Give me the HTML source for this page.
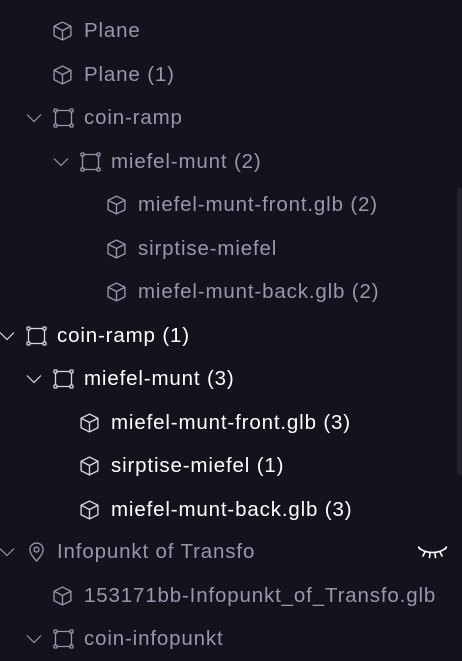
<!DOCTYPE html>
<html><head><meta charset="utf-8"><style>
body{margin:0;width:462px;height:660px;background:#13131d;overflow:hidden;font-family:"Liberation Sans",sans-serif;position:relative}
.r{position:absolute;height:44px;left:0;right:0}
.r span{position:absolute;top:50%;transform:translateY(-50%);font-size:20.5px;letter-spacing:0.85px;white-space:nowrap}
.d span,.d svg{color:#9797ad}
.b span{color:#ffffff}
.b svg{color:#d8d8e0}
svg{position:absolute;top:50%;transform:translateY(-50%)}
.sb{position:absolute;left:457px;top:187px;width:5px;height:288px;background:#22222d;border-radius:3px}
</style></head><body>
<svg width="0" height="0" style="position:absolute"><defs>
<symbol id="cube" viewBox="0 0 20 20"><g fill="none" stroke="currentColor" stroke-width="1.3" stroke-linejoin="round"><path d="M10 1.5L18 5.5V14.5L10 18.5L2 14.5V5.5Z"/><path d="M2 5.5L10 9.5L18 5.5M10 9.5V18.5"/></g></symbol>
<symbol id="grp" viewBox="0 0 21 20"><g fill="none" stroke="currentColor" stroke-width="1.3"><path d="M4 2.5H17M4 17.5H17M2.5 4V16M18.5 4V16"/><rect x="1" y="1" width="3" height="3" rx=".6"/><rect x="17" y="1" width="3" height="3" rx=".6"/><rect x="1" y="16" width="3" height="3" rx=".6"/><rect x="17" y="16" width="3" height="3" rx=".6"/></g></symbol>
<symbol id="chev" viewBox="0 0 16 10"><path d="M1 1.5L8 8.5L15 1.5" fill="none" stroke="currentColor" stroke-width="1.2"/></symbol>
<symbol id="pin" viewBox="0 0 18 22"><g fill="none" stroke="currentColor" stroke-width="1.4"><path d="M9 20.5C9 20.5 2 13.5 2 8.5A7 7 0 0 1 16 8.5C16 13.5 9 20.5 9 20.5Z"/><circle cx="9" cy="8.5" r="2.6"/></g></symbol>
</defs></svg>
<div class="sb"></div>

<div class="r d" style="top:9px"><svg style="left:52px" width="21" height="21"><use href="#cube"/></svg><span style="left:84px">Plane</span></div>
<div class="r d" style="top:52.5px"><svg style="left:52px" width="21" height="21"><use href="#cube"/></svg><span style="left:84px">Plane (1)</span></div>
<div class="r d" style="top:96px"><svg style="left:26px" width="16" height="10"><use href="#chev"/></svg><svg style="left:53px" width="21" height="20"><use href="#grp"/></svg><span style="left:84px">coin-ramp</span></div>
<div class="r d" style="top:139.5px"><svg style="left:53px" width="16" height="10"><use href="#chev"/></svg><svg style="left:80px" width="21" height="20"><use href="#grp"/></svg><span style="left:111px">miefel-munt (2)</span></div>
<div class="r d" style="top:183px"><svg style="left:106px" width="21" height="21"><use href="#cube"/></svg><span style="left:138px">miefel-munt-front.glb (2)</span></div>
<div class="r d" style="top:226.5px"><svg style="left:106px" width="21" height="21"><use href="#cube"/></svg><span style="left:138px">sirptise-miefel</span></div>
<div class="r d" style="top:270px"><svg style="left:106px" width="21" height="21"><use href="#cube"/></svg><span style="left:138px">miefel-munt-back.glb (2)</span></div>
<div class="r b" style="top:313.5px"><svg style="left:-1px" width="16" height="10"><use href="#chev"/></svg><svg style="left:26px" width="21" height="20"><use href="#grp"/></svg><span style="left:57px">coin-ramp (1)</span></div>
<div class="r b" style="top:357px"><svg style="left:26px" width="16" height="10"><use href="#chev"/></svg><svg style="left:53px" width="21" height="20"><use href="#grp"/></svg><span style="left:84px">miefel-munt (3)</span></div>
<div class="r b" style="top:400.5px"><svg style="left:79px" width="21" height="21"><use href="#cube"/></svg><span style="left:111px">miefel-munt-front.glb (3)</span></div>
<div class="r b" style="top:444px"><svg style="left:79px" width="21" height="21"><use href="#cube"/></svg><span style="left:111px">sirptise-miefel (1)</span></div>
<div class="r b" style="top:487.5px"><svg style="left:79px" width="21" height="21"><use href="#cube"/></svg><span style="left:111px">miefel-munt-back.glb (3)</span></div>
<div class="r d" style="top:530px"><svg style="left:-1px" width="16" height="10"><use href="#chev"/></svg><svg style="left:28px" width="17" height="21"><use href="#pin"/></svg><span style="left:57px">Infopunkt of Transfo</span>
<svg style="left:418px" width="29" height="14" viewBox="0 0 29 14"><g fill="none" stroke="#fff" stroke-width="1.6" stroke-linecap="round"><path d="M1 3C8 9 21 9 28 3"/><path d="M7 7L5 11M12 8.5L11.5 12.5M17 8.5L17.5 12.5M22 7L24 11M2 4L0.5 2M27 4L28.5 2"/></g></svg></div>
<div class="r d" style="top:573.5px"><svg style="left:52px" width="21" height="21"><use href="#cube"/></svg><span style="left:84px">153171bb-Infopunkt_of_Transfo.glb</span></div>
<div class="r d" style="top:617px"><svg style="left:26px" width="16" height="10"><use href="#chev"/></svg><svg style="left:53px" width="21" height="20"><use href="#grp"/></svg><span style="left:84px">coin-infopunkt</span></div>
</body></html>
